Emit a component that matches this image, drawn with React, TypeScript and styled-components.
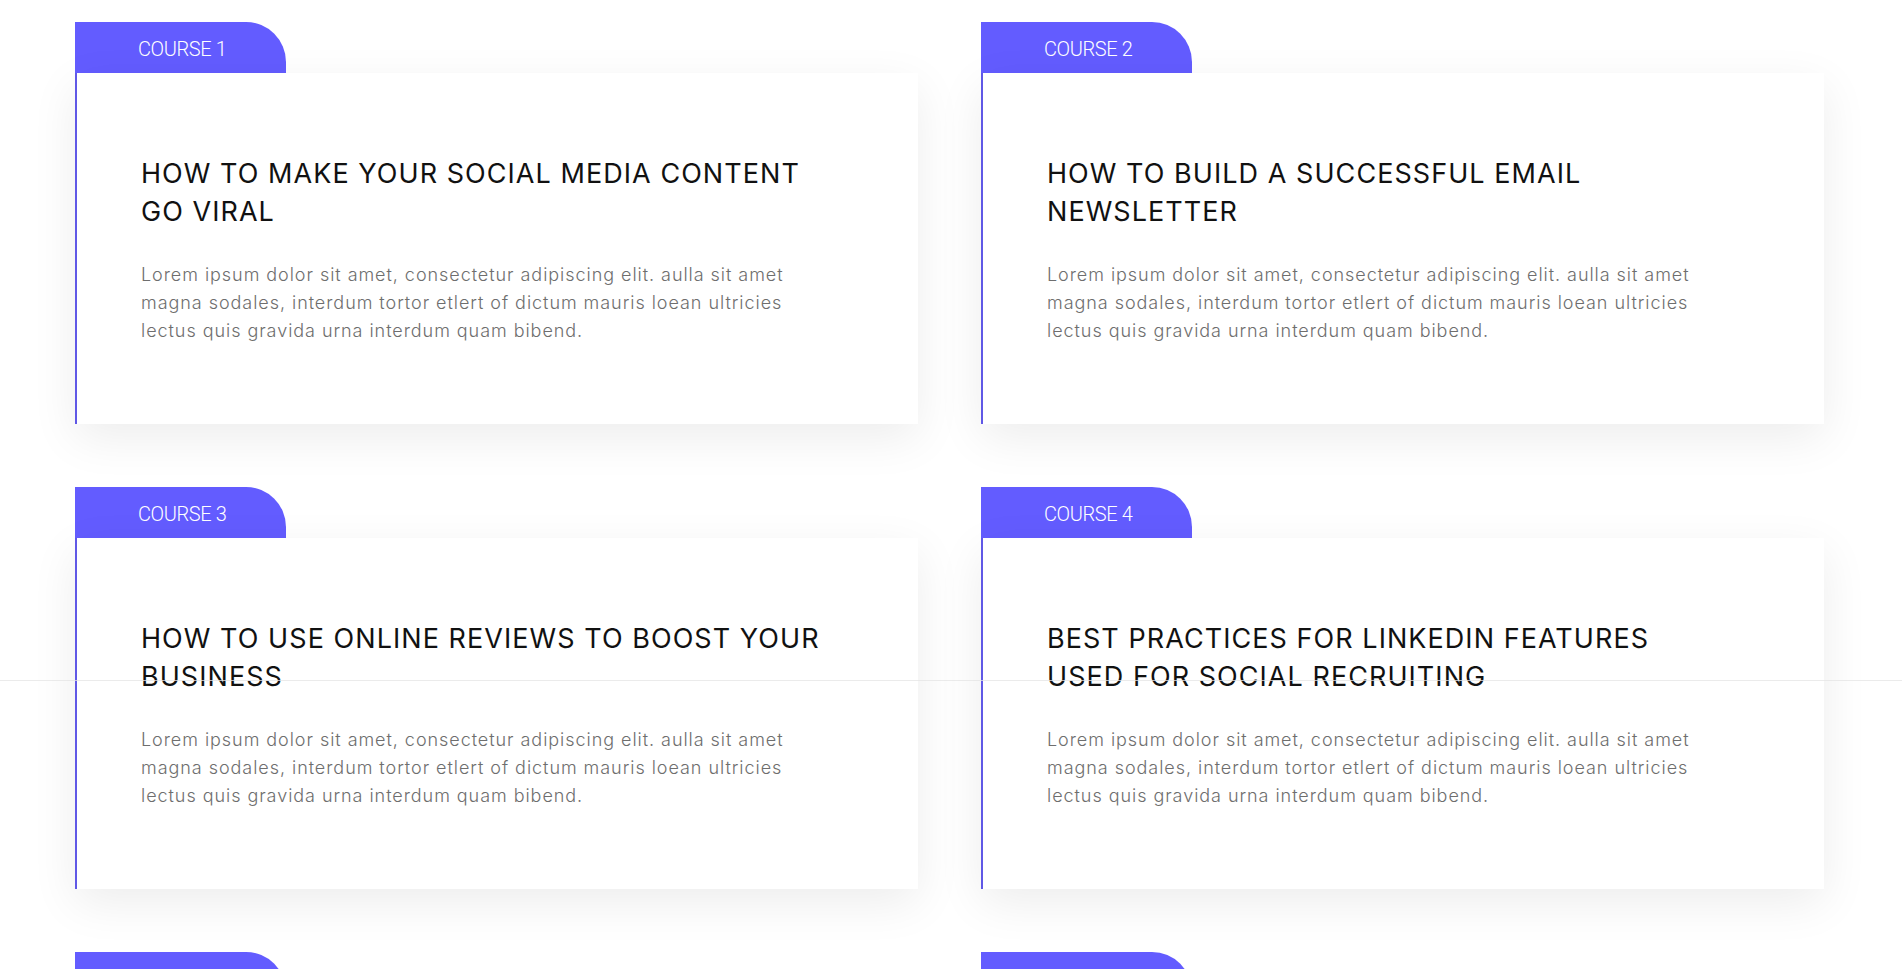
import React from "react";
import styled, { createGlobalStyle } from "styled-components";

const GlobalStyle = createGlobalStyle`
  html, body {
    margin: 0;
    padding: 0;
    background: #ffffff;
  }
  body {
    font-family: "Inter", "Liberation Sans", sans-serif;
    overflow: hidden;
  }
`;

const Page = styled.div`
  display: grid;
  grid-template-columns: 843px 843px;
  column-gap: 63px;
  row-gap: 63px;
  padding: 22px 78px 40px 75px;
`;

const Course = styled.article`
  display: flex;
  flex-direction: column;
`;

const Tab = styled.div`
  width: 211px;
  height: 51px;
  box-sizing: border-box;
  padding-left: 63px;
  padding-top: 2px;
  display: flex;
  align-items: center;
  background: #635cff;
  border-top-right-radius: 40px;
  color: #ffffff;
  font-family: "Roboto", "Liberation Sans", sans-serif;
  font-weight: 300;
  font-size: 20px;
  letter-spacing: -0.4px;
`;

const Panel = styled.div`
  height: 351px;
  box-sizing: border-box;
  background: #ffffff;
  border-left: 2px solid #6058e6;
  padding: 82px 64px 0 64px;
  box-shadow: 0 14px 44px rgba(0, 0, 0, 0.075);
`;

const Title = styled.h2`
  margin: 0 0 30px 0;
  font-family: "Inter", "Liberation Sans", sans-serif;
  font-weight: 400;
  font-size: 27px;
  line-height: 38px;
  letter-spacing: 1.05px;
  color: #111111;
  white-space: nowrap;
`;

const Body = styled.p`
  margin: 0;
  font-family: "Inter", "Liberation Sans", sans-serif;
  font-weight: 300;
  font-size: 18px;
  line-height: 28px;
  letter-spacing: 0.95px;
  color: #6e6e6e;
  white-space: nowrap;
`;

const Seam = styled.div`
  position: fixed;
  left: 0;
  right: 0;
  top: 680px;
  height: 1px;
  background: rgba(228, 228, 228, 0.75);
  pointer-events: none;
`;

const lorem = [
  "Lorem ipsum dolor sit amet, consectetur adipiscing elit. aulla sit amet",
  "magna sodales, interdum tortor etlert of dictum mauris loean ultricies",
  "lectus quis gravida urna interdum quam bibend.",
];

const courses: { label: string; title: string[] }[] = [
  { label: "COURSE 1", title: ["HOW TO MAKE YOUR SOCIAL MEDIA CONTENT", "GO VIRAL"] },
  { label: "COURSE 2", title: ["HOW TO BUILD A SUCCESSFUL EMAIL", "NEWSLETTER"] },
  { label: "COURSE 3", title: ["HOW TO USE ONLINE REVIEWS TO BOOST YOUR", "BUSINESS"] },
  { label: "COURSE 4", title: ["BEST PRACTICES FOR LINKEDIN FEATURES", "USED FOR SOCIAL RECRUITING"] },
  { label: "COURSE 5", title: ["HOW TO GROW YOUR AUDIENCE WITH", "VIDEO MARKETING"] },
  { label: "COURSE 6", title: ["HOW TO WRITE BLOG POSTS THAT", "RANK ON SEARCH ENGINES"] },
];

function Lines({ lines }: { lines: string[] }) {
  return (
    <>
      {lines.map((l, i) => (
        <React.Fragment key={i}>
          {i > 0 && <br />}
          {l}
        </React.Fragment>
      ))}
    </>
  );
}

export default function App() {
  return (
    <>
      <GlobalStyle />
      <Page>
        {courses.map((c) => (
          <Course key={c.label}>
            <Tab>{c.label}</Tab>
            <Panel>
              <Title>
                <Lines lines={c.title} />
              </Title>
              <Body>
                <Lines lines={lorem} />
              </Body>
            </Panel>
          </Course>
        ))}
      </Page>
      <Seam />
    </>
  );
}
